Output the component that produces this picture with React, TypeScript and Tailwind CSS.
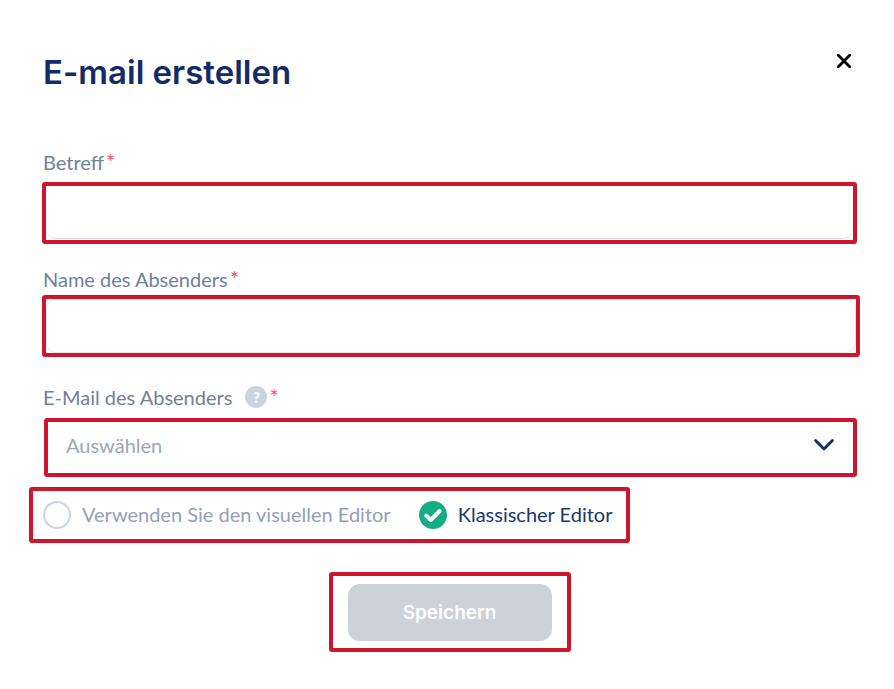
import { useState } from "react";
import type { ReactNode } from "react";

const editors = [
  { value: "visual", label: "Verwenden Sie den visuellen Editor" },
  { value: "classic", label: "Klassischer Editor" },
];

function Required() {
  return <span className="ml-[2px] text-[22px] text-[#ff4d73]">*</span>;
}

function Highlight({ className = "", children }: { className?: string; children: ReactNode }) {
  return <div className={`rounded-[3px] border-4 border-[#cd152d] ${className}`}>{children}</div>;
}

export default function App() {
  const [editor, setEditor] = useState("classic");

  return (
    <main
      role="dialog"
      aria-labelledby="dialog-title"
      className="min-h-screen bg-white pt-[50px] pr-[37px] pb-9 pl-[42px] font-['Lato','Liberation_Sans',sans-serif] text-[20px] leading-6 text-[#70819a]"
    >
      <header className="flex items-start justify-between pl-px">
        <h1
          id="dialog-title"
          className="font-['Inter','Liberation_Sans',sans-serif] text-[33px] leading-[44px] font-semibold text-[#142c66]"
        >
          E-mail erstellen
        </h1>
        <button type="button" aria-label="Schließen" className="mr-px p-1 text-black">
          <svg viewBox="0 0 16 16" className="size-4" fill="none" stroke="currentColor" strokeWidth="2.8" strokeLinecap="round">
            <path d="M2.3 1.3 13.7 12.7M13.7 1.3 2.3 12.7" />
          </svg>
        </button>
      </header>

      <form className="mt-14" onSubmit={(e) => e.preventDefault()}>
        <label htmlFor="subject" className="block pl-px">
          Betreff
          <Required />
        </label>
        <Highlight className="mt-2 pb-px">
          <input
            id="subject"
            type="text"
            required
            className="block h-[53px] w-full rounded-b-[10px] border-b border-[#d8dfe4] px-5 outline-none"
          />
        </Highlight>

        <label htmlFor="sender-name" className="mt-[23px] block pl-px">
          Name des Absenders
          <Required />
        </label>
        <Highlight className="-mr-[3px] mt-1">
          <input
            id="sender-name"
            type="text"
            required
            className="block h-[54px] w-full rounded-[10px] border border-[#e3e8eb] px-5 outline-none"
          />
        </Highlight>

        <div className="mt-7 flex items-center pl-px">
          <label htmlFor="sender-email">E-Mail des Absenders</label>
          <button
            type="button"
            aria-label="Hilfe"
            className="ml-[13px] size-[22px] rounded-full bg-[#cbd5e1] text-center text-[15px] leading-[22px] font-black text-white"
          >
            ?
          </button>
          <Required />
        </div>
        <Highlight className="relative mt-[9px] ml-[2px]">
          <select
            id="sender-email"
            required
            defaultValue=""
            className="block h-[51px] w-full appearance-none rounded-lg bg-white pr-12 pb-[6px] pl-[18px] text-[#9aa7b7] outline-none"
          >
            <option value="">Auswählen</option>
          </select>
          <svg
            viewBox="0 0 20 12"
            className="pointer-events-none absolute top-[17px] right-[19px] h-3 w-5"
            fill="none"
            stroke="#142c66"
            strokeWidth="2.8"
            strokeLinecap="round"
            strokeLinejoin="round"
          >
            <path d="M1.6 1.6 10 10 18.4 1.6" />
          </svg>
        </Highlight>

        <Highlight className="-ml-[13px] mt-[10px] flex w-fit gap-7 py-[10px] pr-[14px] pl-[10px]">
          {editors.map(({ value, label }) => (
            <label key={value} className="flex items-center gap-[11px] text-[#93a0bb] has-checked:text-[#20366f]">
              <span className="grid shrink-0">
                <input
                  type="radio"
                  name="editor"
                  value={value}
                  checked={editor === value}
                  onChange={() => setEditor(value)}
                  className="peer col-start-1 row-start-1 size-7 appearance-none rounded-full border-2 border-[#cbd5e1] checked:border-[#13ae83] checked:bg-[#13ae83]"
                />
                <svg
                  viewBox="0 0 28 28"
                  className="pointer-events-none invisible col-start-1 row-start-1 size-7 peer-checked:visible"
                  fill="none"
                  stroke="white"
                  strokeWidth="4"
                  strokeLinecap="round"
                  strokeLinejoin="round"
                >
                  <path d="m7.2 14.6 4.6 4.4 8.8-9" />
                </svg>
              </span>
              <span className="pb-[2px]">{label}</span>
            </label>
          ))}
        </Highlight>

        <Highlight className="mx-auto mt-[29px] w-fit px-[15px] pt-2 pb-[7px]">
          <button
            type="submit"
            disabled
            className="block h-[57px] w-[204px] rounded-xl bg-[#cbd2d9] font-['Inter','Liberation_Sans',sans-serif] text-[19px] font-semibold text-white"
          >
            Speichern
          </button>
        </Highlight>
      </form>
    </main>
  );
}
